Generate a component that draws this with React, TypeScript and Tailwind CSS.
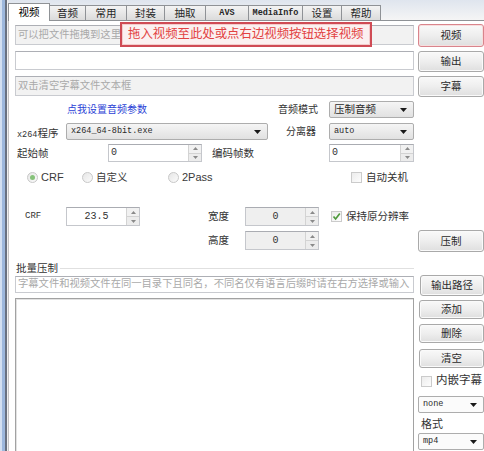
import React from 'react';

const SANS = "font-['Liberation_Sans','Noto_Sans_CJK_SC',sans-serif]";
const MONO = "font-['Liberation_Mono','Noto_Sans_CJK_SC',monospace]";

const TABS = [
  { label: '视频', w: 'w-[42px]', active: true },
  { label: '音频', w: 'w-[37px]' },
  { label: '常用', w: 'w-[42px]' },
  { label: '封装', w: 'w-[39px]' },
  { label: '抽取', w: 'w-[42px]' },
  { label: 'AVS', w: 'w-[44px]', mono: true },
  { label: 'MediaInfo', w: 'w-[55px]', mono: true },
  { label: '设置', w: 'w-[40px]' },
  { label: '帮助', w: 'w-[40px]' },
];

function Arrow() {
  return (
    <svg width="7" height="4" viewBox="0 0 7 4" className="shrink-0">
      <path d="M0 0h7L3.5 4z" fill="#1a1a1a" />
    </svg>
  );
}

function Btn({ label, className = '', focus = false }: { label: string; className?: string; focus?: boolean }) {
  return (
    <div
      className={`flex shrink-0 items-center justify-center rounded-[3px] border ${
        focus ? 'border-[#d9848c] shadow-[inset_0_0_0_1px_#f6dede]' : 'border-[#a9a9a9] shadow-[inset_0_0_0_1px_#fafafa]'
      } bg-linear-to-b from-[#f9f9f9] via-[#eeeeee] to-[#dfdfdf] text-[10.5px] leading-none text-[#2a2a2a] ${className}`}
    >
      {label}
    </div>
  );
}

function TextBox({ placeholder = '', gray = false, className = '' }: { placeholder?: string; gray?: boolean; className?: string }) {
  return (
    <div
      className={`flex shrink-0 items-center overflow-hidden border border-[#c9cbd0] border-t-[#adafb5] px-[2px] ${
        gray ? 'bg-[#f2f2f2]' : 'bg-white'
      } ${className}`}
    >
      <span className="whitespace-nowrap text-[10.3px] leading-none text-[#a9a9a9]">{placeholder}</span>
    </div>
  );
}

function Select({ text, className = '', mono = false, flat = false }: { text: string; className?: string; mono?: boolean; flat?: boolean }) {
  return (
    <div
      className={`flex shrink-0 items-center justify-between rounded-[2px] border border-[#adadad] pl-[4px] pr-[6px] ${
        flat ? 'bg-[#fbfbfb]' : 'bg-linear-to-b from-[#f5f5f5] to-[#e1e1e1]'
      } ${className}`}
    >
      <span className={`leading-none text-[#2a2a2a] ${mono ? `${MONO} text-[8.5px]` : 'text-[10.5px]'}`}>{text}</span>
      <Arrow />
    </div>
  );
}

function Spin({ value, className = '', disabled = false, center = false }: { value: string; className?: string; disabled?: boolean; center?: boolean }) {
  return (
    <div
      className={`flex shrink-0 border border-[#c5c7cc] border-t-[#aaacb2] ${disabled ? 'bg-[#efefef]' : 'bg-white'} ${className}`}
    >
      <div className={`flex flex-1 items-center ${center ? 'justify-center' : 'pl-[2px]'} ${MONO} text-[10px] leading-none text-[#333]`}>
        {value}
      </div>
      <div className="flex w-[13px] flex-col border-l border-[#d3d3d3]">
        <div className="flex flex-1 items-center justify-center border-b border-[#d3d3d3] bg-[#f1f1f1]">
          <svg width="5" height="3" viewBox="0 0 5 3">
            <path d="M0 3h5L2.5 0z" fill="#8a8a8a" />
          </svg>
        </div>
        <div className="flex flex-1 items-center justify-center bg-[#ececec]">
          <svg width="5" height="3" viewBox="0 0 5 3">
            <path d="M0 0h5L2.5 3z" fill="#8a8a8a" />
          </svg>
        </div>
      </div>
    </div>
  );
}

function Radio({ label, checked = false, className = '', latin = false }: { label: string; checked?: boolean; className?: string; latin?: boolean }) {
  return (
    <div className={`flex shrink-0 items-center ${className}`}>
      <div className="flex h-[11px] w-[11px] items-center justify-center rounded-full border border-[#c8c8c8] bg-linear-to-br from-[#e6e6e6] to-[#fbfbfb]">
        {checked && <div className="h-[5px] w-[5px] rounded-full bg-[#86c27a]" />}
      </div>
      <span className={`ml-[3px] leading-none text-[#3a3a3a] ${latin ? 'text-[11px]' : 'text-[10.5px]'}`}>{label}</span>
    </div>
  );
}

function Check({ label, checked = false, className = '', big = false }: { label: string; checked?: boolean; className?: string; big?: boolean }) {
  return (
    <div className={`flex shrink-0 items-center ${className}`}>
      <div className="flex h-[11px] w-[11px] items-center justify-center border border-[#cbcbcb] bg-linear-to-br from-[#ececec] to-[#fdfdfd]">
        {checked && (
          <svg width="9" height="9" viewBox="0 0 9 9">
            <path d="M1.5 4.5 3.6 7 7.8 1.5" fill="none" stroke="#4f9a3c" strokeWidth="1.7" />
          </svg>
        )}
      </div>
      <span className={`ml-[4px] leading-none text-[#333] ${big ? 'text-[11.5px]' : 'text-[10.5px]'}`}>{label}</span>
    </div>
  );
}

export default function App() {
  return (
    <div className={`flex h-[451px] w-[484px] overflow-hidden bg-white ${SANS}`}>
      {/* window frame */}
      <div className="flex shrink-0">
        <div className="w-[2px] bg-[#d3e0f1]" />
        <div className="w-[3px] bg-[#9db8dd]" />
        <div className="w-[2px] bg-[#687180]" />
        <div className="w-[1px] bg-[#efefef]" />
      </div>

      <div className="flex min-w-0 flex-1 flex-col">
        {/* tabs */}
        <div className="flex h-[20px] shrink-0 items-end bg-linear-to-b from-[#dfe5ee] to-[#f5f5f5]">
          {TABS.map((t) =>
            t.active ? (
              <div
                key={t.label}
                className={`relative z-10 -mb-px flex h-[18px] shrink-0 items-center justify-center border-x border-t border-[#8f9296] bg-white text-[10.5px] leading-none text-black ${t.w}`}
              >
                {t.label}
              </div>
            ) : (
              <div
                key={t.label}
                className={`-ml-px flex h-[15px] shrink-0 items-center justify-center border-x border-t border-[#8f9296] bg-linear-to-b from-[#f4f4f4] to-[#dbdbdb] leading-none text-[#262626] ${t.w} ${
                  t.mono ? `${MONO} text-[8.5px] font-bold` : 'text-[10.5px]'
                }`}
              >
                {t.label}
              </div>
            ),
          )}
        </div>

        {/* panel */}
        <div className="flex min-h-0 flex-1 border-l border-t border-l-[#c4c4c4] border-t-[#8f9296]">
          {/* left column */}
          <div className="ml-[6px] flex w-[399px] shrink-0 flex-col">
            <div className="relative mt-[4px]">
              <TextBox gray placeholder="可以把文件拖拽到这里" className="h-[20px]" />
              <div className="absolute left-[105px] top-[-3px] flex h-[25px] w-[252px] items-center border-2 border-[#cf4b55] bg-[#fbf0f0] pl-[6px] shadow-[inset_0_0_0_1px_#f4cccc]">
                <span className="whitespace-nowrap text-[12.4px] leading-none text-[#e24242]">拖入视频至此处或点右边视频按钮选择视频</span>
              </div>
            </div>
            <TextBox className="mt-[6px] h-[19px]" />
            <TextBox gray placeholder="双击清空字幕文件文本框" className="mt-[6px] h-[20px]" />

            {/* audio row */}
            <div className="mt-[5px] flex h-[17px] shrink-0 items-center">
              <span className="ml-[52px] w-[210px] text-[10px] leading-none text-[#2b3fd6]">点我设置音频参数</span>
              <span className="w-[41px] whitespace-nowrap text-right text-[10px] leading-none text-[#333]">音频模式</span>
              <Select text="压制音频" className="ml-[11px] h-[17px] w-[85px]" />
            </div>

            {/* x264 row */}
            <div className="mt-[5px] flex h-[17px] shrink-0 items-center">
              <span className="w-[51px] pl-[2px] leading-none text-[#333]">
                <span className={`${MONO} text-[8.5px]`}>x264</span>
                <span className="text-[10.5px]">程序</span>
              </span>
              <Select text="x264_64-8bit.exe" mono className="h-[17px] w-[202px]" />
              <span className="w-[48px] text-right text-[10px] leading-none text-[#333]">分离器</span>
              <Select text="auto" mono className="ml-[13px] h-[17px] w-[85px]" />
            </div>

            {/* frames row */}
            <div className="mt-[4px] flex h-[18px] shrink-0 items-center">
              <span className="w-[93px] pl-[2px] text-[10.5px] leading-none text-[#333]">起始帧</span>
              <Spin value="0" className="h-[18px] w-[94px]" />
              <span className="ml-[10px] w-[117px] text-[10.5px] leading-none text-[#333]">编码帧数</span>
              <Spin value="0" className="h-[18px] w-[85px]" />
            </div>

            {/* mode row */}
            <div className="mt-[7px] flex h-[16px] shrink-0 items-center">
              <Radio checked latin label="CRF" className="ml-[12px] w-[55px]" />
              <Radio label="自定义" className="w-[86px]" />
              <Radio latin label="2Pass" className="w-[183px]" />
              <Check label="自动关机" />
            </div>

            {/* crf row */}
            <div className="mt-[22px] flex h-[19px] shrink-0 items-center">
              <span className={`w-[51px] pl-[10px] ${MONO} text-[9px] leading-none text-[#333]`}>CRF</span>
              <Spin value="23.5" center className="h-[19px] w-[74px]" />
              <span className="ml-[68px] w-[37px] text-[10.5px] leading-none text-[#333]">宽度</span>
              <Spin value="0" center disabled className="h-[19px] w-[74px]" />
              <Check checked label="保持原分辨率" className="ml-[12px]" />
            </div>

            <div className="mt-[5px] flex h-[19px] shrink-0 items-center">
              <span className="ml-[193px] w-[37px] text-[10.5px] leading-none text-[#333]">高度</span>
              <Spin value="0" center disabled className="h-[19px] w-[74px]" />
            </div>

            {/* batch group */}
            <div className="mt-[11px] flex h-[14px] shrink-0 items-center">
              <span className="pl-[1px] text-[10.5px] leading-none text-[#333]">批量压制</span>
              <div className="ml-[2px] h-px flex-1 bg-[#e0e0e0]" />
            </div>
            <TextBox
              placeholder="字幕文件和视频文件在同一目录下且同名，不同名仅有语言后缀时请在右方选择或输入"
              className="mt-[1px] h-[17px] bg-[#fcfcfc]"
            />
            <div className="mt-[5px] h-[170px] shrink-0 border border-[#a2a2a2] bg-white shadow-[inset_1px_1px_0_#e2e2e2]" />
          </div>

          {/* right column */}
          <div className="ml-[4px] flex w-[66px] shrink-0 flex-col">
            <Btn focus label="视频" className="mt-[3px] h-[23px]" />
            <Btn label="输出" className="mt-[4px] h-[21px]" />
            <Btn label="字幕" className="mt-[4px] h-[21px]" />
            <Btn label="压制" className="mt-[133px] h-[22px]" />
            <Btn label="输出路径" className="ml-[2px] mt-[23px] h-[21px]" />
            <Btn label="添加" className="ml-[1px] mt-[4px] h-[19px]" />
            <Btn label="删除" className="ml-[1px] mt-[5px] h-[19px]" />
            <Btn label="清空" className="ml-[1px] mt-[6px] h-[19px]" />
            <Check big label="内嵌字幕" className="ml-[3px] mt-[6px] h-[14px]" />
            <Select flat mono text="none" className="mt-[8px] h-[17px]" />
            <span className="ml-[3px] mt-[4px] flex h-[14px] items-center text-[11px] leading-none text-[#333]">格式</span>
            <Select flat mono text="mp4" className="mt-[2px] h-[17px]" />
          </div>
        </div>
      </div>
    </div>
  );
}
